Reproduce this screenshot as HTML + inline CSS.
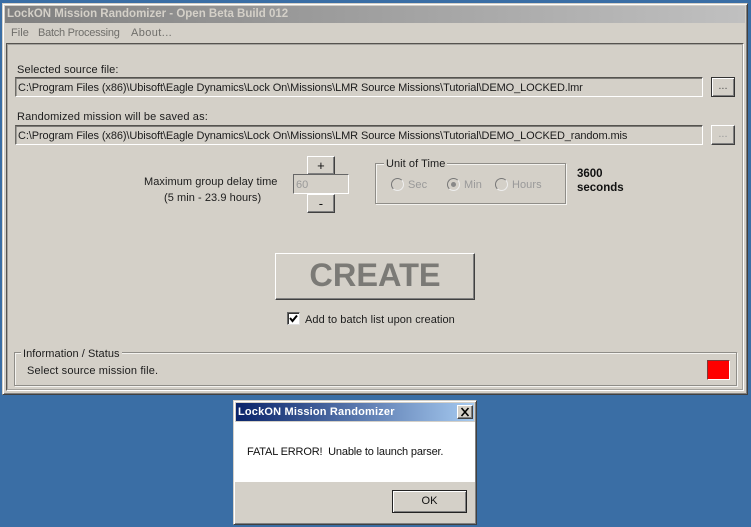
<!DOCTYPE html>
<html><head><meta charset="utf-8">
<style>
html,body{margin:0;padding:0}
body{width:751px;height:527px;position:relative;overflow:hidden;background:#3a6ea5;font-family:"Liberation Sans",sans-serif;font-size:11px;letter-spacing:.06px;color:#1c1c1c}
div,span{position:absolute;box-sizing:border-box;white-space:nowrap}
.win{background:#d4d0c8;border:1px solid;border-color:#d4d0c8 #404040 #404040 #d4d0c8;box-shadow:inset 1px 1px 0 #fff,inset -1px -1px 0 #808080}
.field{left:15px;width:688px;height:20px;background:#d4d0c8;border:1px solid;border-color:#55534f #fff #fff #6e6c67;box-shadow:inset 0 1px 0 #7b7975,inset 1px 0 0 #a09e99;padding:3px 0 0 2px;font-size:11px;letter-spacing:-.1px;line-height:14px}
.btn{background:#d4d0c8;border:1px solid;border-color:#fff #404040 #404040 #fff;box-shadow:inset -1px -1px 0 #808080;text-align:center}
.group{border:1px solid #8f8d88;box-shadow:1px 1px 0 #f4f3f0,inset 1px 1px 0 #f4f3f0}
.legend{background:#d4d0c8;padding:0 3px;line-height:14px}
.radio{width:13px;height:13px;border-radius:50%;border:1px solid #777;border-right-color:#eee;border-bottom-color:#eee;background:#d4d0c8}
</style></head><body>

<div class="win" style="left:2px;top:3px;width:746px;height:392px"></div>
<div style="left:5px;top:6px;width:740px;height:17px;background:linear-gradient(90deg,#808080,#c0c0c0);color:#d4d0c8;font-weight:bold;font-size:11.5px;letter-spacing:0;line-height:16px;padding-left:2px">LockON Mission Randomizer - Open Beta Build 012</div>

<span style="left:11px;top:26px;line-height:14px;color:#6f6e6a">File</span>
<span style="left:38px;top:26px;line-height:14px;color:#6f6e6a;letter-spacing:-.25px">Batch Processing</span>
<span style="left:131px;top:26px;line-height:14px;color:#6f6e6a;letter-spacing:.4px">About...</span>

<div style="left:6px;top:43px;width:738px;height:348px;border:1px solid;border-color:#55534f #fff #fff #55534f;box-shadow:inset 1px 1px 0 #a5a39e,inset -1px -1px 0 #a5a39e"></div>

<span style="left:17px;top:63px;line-height:14px;letter-spacing:.12px">Selected source file:</span>
<div class="field" style="top:77px">C:\Program Files (x86)\Ubisoft\Eagle Dynamics\Lock On\Missions\LMR Source Missions\Tutorial\DEMO_LOCKED.lmr</div>
<div class="btn" style="left:711px;top:77px;width:24px;height:20px;border-color:#333;box-shadow:inset 1px 1px 0 #fff,inset -1px -1px 0 #808080;line-height:17px;color:#555">...</div>

<span style="left:17px;top:110px;line-height:14px;letter-spacing:.14px">Randomized mission will be saved as:</span>
<div class="field" style="top:125px">C:\Program Files (x86)\Ubisoft\Eagle Dynamics\Lock On\Missions\LMR Source Missions\Tutorial\DEMO_LOCKED_random.mis</div>
<div class="btn" style="left:711px;top:125px;width:24px;height:20px;line-height:17px;color:#999">...</div>

<span style="left:144px;top:175px;line-height:14px">Maximum group delay time</span>
<span style="left:164px;top:191px;line-height:14px">(5 min - 23.9 hours)</span>

<div class="btn" style="left:307px;top:156px;width:28px;height:19px;line-height:18px;font-size:13px;color:#111">+</div>
<div style="left:293px;top:174px;width:56px;height:20px;background:#d4d0c8;border:1px solid;border-color:#666 #fff #fff #666;padding:3px 0 0 2px;line-height:14px;color:#999">60</div>
<div class="btn" style="left:307px;top:194px;width:28px;height:19px;line-height:18px;font-size:13px;color:#111">-</div>

<div class="group" style="left:375px;top:163px;width:191px;height:41px"></div>
<span class="legend" style="left:384px;top:157px;padding:0 2px">Unit of Time</span>
<div class="radio" style="left:391px;top:178px"></div>
<span style="left:408px;top:178px;line-height:14px;color:#999">Sec</span>
<div class="radio" style="left:447px;top:178px"></div>
<div style="left:451px;top:182px;width:5px;height:5px;border-radius:50%;background:#888"></div>
<span style="left:464px;top:178px;line-height:14px;color:#999">Min</span>
<div class="radio" style="left:495px;top:178px"></div>
<span style="left:512px;top:178px;line-height:14px;color:#999">Hours</span>

<span style="left:577px;top:167px;font-weight:bold;font-size:11.5px;letter-spacing:0;line-height:14px;color:#111">3600</span>
<span style="left:577px;top:181px;font-weight:bold;font-size:11.5px;letter-spacing:0;line-height:14px;color:#111">seconds</span>

<div class="btn" style="left:275px;top:253px;width:200px;height:47px;font-weight:bold;font-size:32.5px;letter-spacing:0;line-height:43px;color:#7b7a76">CREATE</div>

<div style="left:287px;top:312px;width:13px;height:13px;background:#fff;border:1px solid;border-color:#666 #ddd #ddd #666;box-shadow:inset 1px 1px 0 #333"></div>
<svg style="position:absolute;left:287px;top:312px" width="13" height="13"><path d="M3 6l2.5 3L10 3.5" fill="none" stroke="#000" stroke-width="2"/></svg>
<span style="left:305px;top:313px;line-height:14px">Add to batch list upon creation</span>

<div class="group" style="left:14px;top:352px;width:723px;height:34px"></div>
<span class="legend" style="left:21px;top:347px;padding:0 2px;">Information / Status</span>
<span style="left:27px;top:364px;line-height:14px;letter-spacing:.15px">Select source mission file.</span>
<div style="left:707px;top:360px;width:23px;height:20px;background:#fe0000;border:1px solid;border-color:#7a3a3a #fff #fff #7a3a3a"></div>

<div class="win" style="left:233px;top:400px;width:244px;height:125px"></div>
<div style="left:236px;top:403px;width:238px;height:18px;background:linear-gradient(90deg,#0a246a,#a6caf0);color:#fff;font-weight:bold;font-size:11px;line-height:18px;padding-left:2px;letter-spacing:.18px">LockON Mission Randomizer</div>
<div class="btn" style="left:457px;top:405px;width:16px;height:14px"></div>
<svg style="position:absolute;left:457px;top:405px" width="16" height="14"><path d="M4.5 3l7 8M11.5 3l-7 8" stroke="#000" stroke-width="1.6" fill="none"/></svg>
<div style="left:235px;top:422px;width:240px;height:60px;background:#fff"></div>
<span style="left:247px;top:445px;line-height:14px;font-size:11px;letter-spacing:-.17px;color:#111">FATAL ERROR!&nbsp; Unable to launch parser.</span>
<div class="btn" style="left:392px;top:490px;width:75px;height:23px;border-color:#222;box-shadow:inset 1px 1px 0 #fff,inset -1px -1px 0 #808080;line-height:21px;color:#111;font-size:11px">OK</div>

</body></html>
